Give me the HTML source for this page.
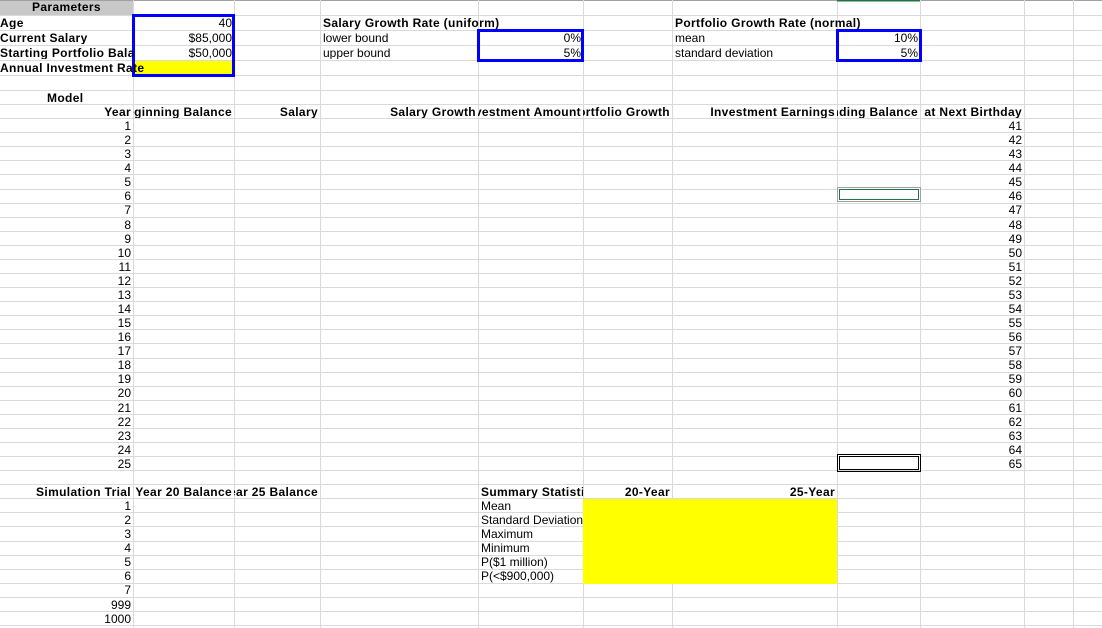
<!DOCTYPE html>
<html><head><meta charset="utf-8"><style>
*{margin:0;padding:0;box-sizing:border-box}
body{width:1102px;height:628px;background:#fff;position:relative;overflow:hidden;font-family:"Liberation Sans",Arial,sans-serif;font-size:12px;color:#000}
.c{position:absolute;height:14px;line-height:14px;white-space:nowrap;overflow:hidden;padding-top:1px;line-height:14px}
.r{display:flex;justify-content:flex-end;padding-right:2px}
.b{font-weight:bold;letter-spacing:0.35px}
.l{padding-left:2px}
.box{position:absolute}
.col{position:absolute;line-height:14.08px;font-size:12px}
</style></head><body>
<svg width="1102" height="628" style="position:absolute;left:0;top:0">
<g stroke="#dadada" stroke-width="1">
<line x1="0" y1="0.5" x2="1102" y2="0.5" stroke="#a0a0a0"/>
<line x1="0" y1="15.5" x2="1102" y2="15.5"/><line x1="0" y1="30.5" x2="1102" y2="30.5"/><line x1="0" y1="45.5" x2="1102" y2="45.5"/><line x1="0" y1="60.5" x2="1102" y2="60.5"/><line x1="0" y1="75.5" x2="1102" y2="75.5"/><line x1="0" y1="90.5" x2="1102" y2="90.5"/>
<line x1="0" y1="104.5" x2="1102" y2="104.5"/><line x1="0" y1="118.5" x2="1102" y2="118.5"/><line x1="0" y1="132.5" x2="1102" y2="132.5"/><line x1="0" y1="146.5" x2="1102" y2="146.5"/><line x1="0" y1="160.5" x2="1102" y2="160.5"/><line x1="0" y1="174.5" x2="1102" y2="174.5"/><line x1="0" y1="189.5" x2="1102" y2="189.5"/><line x1="0" y1="203.5" x2="1102" y2="203.5"/><line x1="0" y1="217.5" x2="1102" y2="217.5"/><line x1="0" y1="231.5" x2="1102" y2="231.5"/><line x1="0" y1="245.5" x2="1102" y2="245.5"/><line x1="0" y1="259.5" x2="1102" y2="259.5"/><line x1="0" y1="273.5" x2="1102" y2="273.5"/><line x1="0" y1="287.5" x2="1102" y2="287.5"/><line x1="0" y1="301.5" x2="1102" y2="301.5"/><line x1="0" y1="315.5" x2="1102" y2="315.5"/><line x1="0" y1="329.5" x2="1102" y2="329.5"/><line x1="0" y1="343.5" x2="1102" y2="343.5"/><line x1="0" y1="358.5" x2="1102" y2="358.5"/><line x1="0" y1="372.5" x2="1102" y2="372.5"/><line x1="0" y1="386.5" x2="1102" y2="386.5"/><line x1="0" y1="400.5" x2="1102" y2="400.5"/><line x1="0" y1="414.5" x2="1102" y2="414.5"/><line x1="0" y1="428.5" x2="1102" y2="428.5"/><line x1="0" y1="442.5" x2="1102" y2="442.5"/><line x1="0" y1="456.5" x2="1102" y2="456.5"/><line x1="0" y1="470.5" x2="1102" y2="470.5"/><line x1="0" y1="484.5" x2="1102" y2="484.5"/><line x1="0" y1="498.5" x2="1102" y2="498.5"/><line x1="0" y1="512.5" x2="1102" y2="512.5"/><line x1="0" y1="526.5" x2="1102" y2="526.5"/><line x1="0" y1="541.5" x2="1102" y2="541.5"/><line x1="0" y1="555.5" x2="1102" y2="555.5"/><line x1="0" y1="569.5" x2="1102" y2="569.5"/><line x1="0" y1="583.5" x2="1102" y2="583.5"/><line x1="0" y1="597.5" x2="1102" y2="597.5"/><line x1="0" y1="611.5" x2="1102" y2="611.5"/><line x1="0" y1="625.5" x2="1102" y2="625.5"/>
<line x1="133.5" y1="0" x2="133.5" y2="628"/><line x1="234.5" y1="0" x2="234.5" y2="628"/><line x1="320.5" y1="0" x2="320.5" y2="628"/><line x1="478.5" y1="0" x2="478.5" y2="628"/><line x1="583.5" y1="0" x2="583.5" y2="628"/><line x1="672.5" y1="0" x2="672.5" y2="628"/><line x1="837.5" y1="0" x2="837.5" y2="628"/><line x1="920.5" y1="0" x2="920.5" y2="628"/><line x1="1024.5" y1="0" x2="1024.5" y2="628"/><line x1="1073.5" y1="0" x2="1073.5" y2="628"/>
</g>
<line x1="837" y1="0.5" x2="920" y2="0.5" stroke="#217346" stroke-width="2"/>
</svg>
<div class="box" style="left:0;top:1px;width:133px;height:14px;background:#c8c8c8"></div>
<div class="box" style="left:134px;top:61px;width:99px;height:14px;background:#ffff00"></div>
<div class="box" style="left:583px;top:499px;width:254px;height:85px;background:#ffff00"></div>
<div class="box" style="left:132px;top:14px;width:103px;height:63px;border:3px solid #0000ff"></div>
<div class="box" style="left:477px;top:29px;width:107px;height:33px;border:3px solid #0000ff"></div>
<div class="box" style="left:836px;top:29px;width:86px;height:33px;border:3px solid #0000ff"></div>
<div class="box" style="left:837px;top:187px;width:84px;height:15px;border:1px solid #a0a0a0"></div>
<div class="box" style="left:839px;top:189px;width:80px;height:11px;border:1px solid #217346"></div>
<div class="box" style="left:837px;top:454px;width:84px;height:18px;border:3px double #000"></div>

<div class="c b" style="left:0;top:0;width:133px;text-align:center;padding-top:0">Parameters</div>
<div class="c b" style="left:0;top:15px;width:133px">Age</div>
<div class="c b" style="left:0;top:30px;width:133px">Current Salary</div>
<div class="c b" style="left:0;top:45px;width:133px">Starting Portfolio Balance</div>
<div class="c b" style="left:0;top:60px;overflow:visible">Annual Investment Rate</div>
<div class="c r" style="left:133px;top:15px;width:101px">40</div>
<div class="c r" style="left:133px;top:30px;width:101px">$85,000</div>
<div class="c r" style="left:133px;top:45px;width:101px">$50,000</div>
<div class="c b l" style="left:321px;top:15px;overflow:visible">Salary Growth Rate (uniform)</div>
<div class="c l" style="left:321px;top:30px">lower bound</div>
<div class="c l" style="left:321px;top:45px">upper bound</div>
<div class="c r" style="left:478px;top:30px;width:105px">0%</div>
<div class="c r" style="left:478px;top:45px;width:105px">5%</div>
<div class="c b l" style="left:673px;top:15px;overflow:visible">Portfolio Growth Rate (normal)</div>
<div class="c l" style="left:673px;top:30px">mean</div>
<div class="c l" style="left:673px;top:45px">standard deviation</div>
<div class="c r" style="left:837px;top:30px;width:83px">10%</div>
<div class="c r" style="left:837px;top:45px;width:83px">5%</div>
<div class="c b" style="left:47px;top:90px">Model</div>

<div class="c b r" style="left:0;top:104px;width:133px">Year</div>
<div class="c b r" style="left:133px;top:104px;width:101px">Beginning Balance</div>
<div class="c b r" style="left:234px;top:104px;width:86px">Salary</div>
<div class="c b r" style="left:320px;top:104px;width:158px">Salary Growth</div>
<div class="c b r" style="left:478px;top:104px;width:105px">Investment Amount</div>
<div class="c b r" style="left:583px;top:104px;width:89px">Portfolio Growth</div>
<div class="c b r" style="left:672px;top:104px;width:165px">Investment Earnings</div>
<div class="c b r" style="left:837px;top:104px;width:83px">Ending Balance</div>
<div class="c b r" style="left:920px;top:104px;width:104px">Age at Next Birthday</div>

<div class="col" style="left:0;top:119px;width:133px;text-align:right;padding-right:2px">1<br>2<br>3<br>4<br>5<br>6<br>7<br>8<br>9<br>10<br>11<br>12<br>13<br>14<br>15<br>16<br>17<br>18<br>19<br>20<br>21<br>22<br>23<br>24<br>25</div>
<div class="col" style="left:920px;top:119px;width:104px;text-align:right;padding-right:2px">41<br>42<br>43<br>44<br>45<br>46<br>47<br>48<br>49<br>50<br>51<br>52<br>53<br>54<br>55<br>56<br>57<br>58<br>59<br>60<br>61<br>62<br>63<br>64<br>65</div>

<div class="c b r" style="left:0;top:484px;width:133px">Simulation Trial</div>
<div class="c b r" style="left:133px;top:484px;width:101px">Year 20 Balance</div>
<div class="c b r" style="left:234px;top:484px;width:86px">Year 25 Balance</div>
<div class="c b l" style="left:479px;top:484px;width:104px">Summary Statistics</div>
<div class="c b r" style="left:583px;top:484px;width:89px">20-Year</div>
<div class="c b r" style="left:672px;top:484px;width:165px">25-Year</div>
<div class="col" style="left:0;top:499px;width:133px;text-align:right;padding-right:2px">1<br>2<br>3<br>4<br>5<br>6<br>7<br>999<br>1000</div>
<div class="col" style="left:479px;top:499px;width:104px;padding-left:2px;white-space:nowrap;overflow:hidden">Mean<br>Standard Deviation<br>Maximum<br>Minimum<br>P($1 million)<br>P(&lt;$900,000)</div>
</body></html>
